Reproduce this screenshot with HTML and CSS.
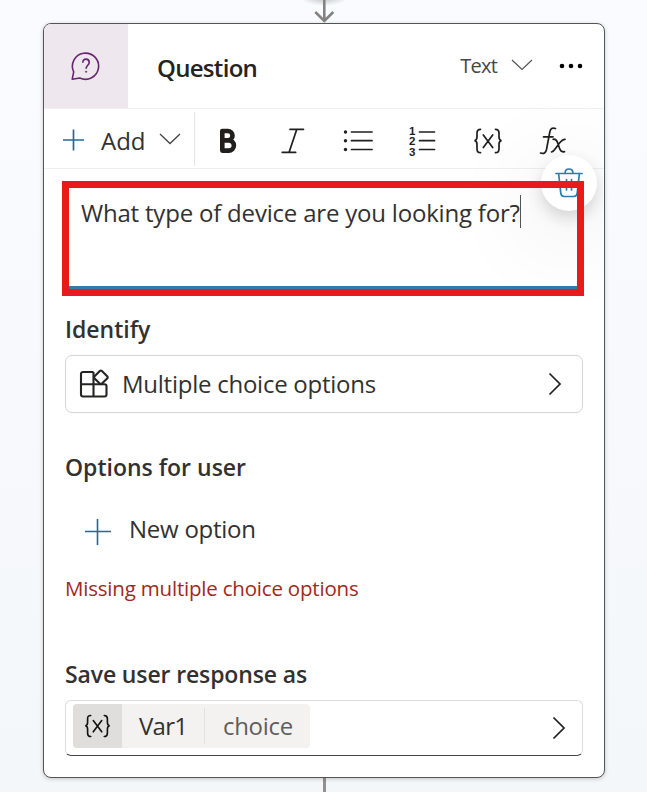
FILE: index.html
```html
<!DOCTYPE html>
<html lang="en">
<head>
<meta charset="utf-8">
<title>Question node</title>
<link rel="stylesheet" href="styles.css">
</head>
<body>
<main class="canvas">
  <div class="connector-top">
    <svg width="24" height="23" viewBox="0 0 24 23" fill="none" stroke="#858381" stroke-width="2.6"><path d="M12.300 0v21M3.300 12l9 9 9-9"/></svg>
  </div>
  <section class="card">
    <header class="card-header">
      <div class="node-icon">
        <svg width="30" height="30" viewBox="0 0 30 30" fill="none" stroke="#66276e" stroke-width="1.6" stroke-linejoin="round"><path d="M1.2 28.2l1.5-7.3A13.1 13.1 0 1 1 8.8 27z"/><path d="M11.8 11.8c0-2.5 1.4-3.7 3.2-3.7s3.2 1.3 3.2 3.3c0 2.8-3.1 3.1-3.1 6.4"/><circle cx="15.1" cy="20.7" r=".7" fill="#66276e" stroke-width=".6"/></svg>
      </div>
      <h1 class="title">Question</h1>
      <button class="type-button"><span class="type-label">Text</span>
        <svg width="22" height="12" viewBox="0 0 22 12" fill="none" stroke="#555" stroke-width="1.2"><path d="M1 1l10 9.500L21 1"/></svg>
      </button>
      <svg class="more" width="24" height="6" viewBox="0 0 24 6"><circle cx="3" cy="3" r="2.300"/><circle cx="12" cy="3" r="2.300"/><circle cx="21" cy="3" r="2.300"/></svg>
    </header>
    <div class="toolbar">
      <button class="add-button">
        <svg width="22" height="22" viewBox="0 0 22 22" fill="none" stroke="#23699b" stroke-width="1.7"><path d="M10.500 .5v21M0 11h21"/></svg>
        <span class="add-label">Add</span>
        <svg class="add-chevron" width="22" height="12" viewBox="0 0 22 12" fill="none" stroke="#444" stroke-width="1.3"><path d="M1 1l10 9.500L21 1"/></svg>
      </button>
      <div class="tools">
        <svg width="20" height="26" viewBox="0 0 20 26" fill="none" stroke="#201f1e" stroke-width="4.6" stroke-linejoin="round"><path d="M3.300 3h5.500a4.500 4.500 0 0 1 0 9.400H3.300zM3.300 12.400h6.500a5 5 0 0 1 0 10.200H3.300z"/></svg>
        <svg width="24" height="26" viewBox="0 0 24 26" fill="none" stroke="#201f1e" stroke-width="1.7" stroke-linecap="round"><path d="M9 1.300h13.500M1.200 24.300h13.500M15.800 1.300l-7.700 23"/></svg>
        <svg width="30" height="26" viewBox="0 0 30 26" fill="none" stroke="#201f1e" stroke-width="1.7" stroke-linecap="round"><path d="M8.500 4H29M8.500 12.700H29M8.500 21.500H29"/><g fill="#201f1e" stroke="none"><circle cx="2.500" cy="4" r="1.700"/><circle cx="2.500" cy="12.700" r="1.700"/><circle cx="2.500" cy="21.500" r="1.700"/></g></svg>
        <svg class="numbered" width="28" height="32" viewBox="0 0 28 32"><path d="M11.500 7H26.500M11.500 15.700H26.500M11.500 24.500H26.500" fill="none" stroke="#201f1e" stroke-width="1.700" stroke-linecap="round"/><text x="1" y="9.500">1</text><text x="1" y="20">2</text><text x="1" y="30.500">3</text></svg>
        <svg width="30" height="26" viewBox="0 0 30 26" fill="none" stroke="#201f1e" stroke-width="1.700" stroke-linecap="round"><path d="M7.500 1.300C4.500 1.300 4 2.600 4 5v4c0 2.300-.8 3.400-2.500 3.700C3.200 13 4 14.100 4 16.400V21c0 2.400.5 3.700 3.500 3.700M22.500 1.300C25.500 1.300 26 2.600 26 5v4c0 2.300.8 3.400 2.500 3.700C26.800 13 26 14.100 26 16.400V21c0 2.400-.5 3.700-3.500 3.700M10.300 7l9.400 12.500M19.700 7l-9.400 12.500"/></svg>
        <svg width="28" height="30" viewBox="0 0 28 30" fill="none" stroke="#201f1e" stroke-width="1.700" stroke-linecap="round"><path d="M1.500 27c3.500 1.200 5.300-.2 6-3.500l3.300-17.500c.7-3.500 2.500-4.700 5.700-3.500M4.500 10.800h9.500M14.200 13.300c2.500-.5 3.300.5 4.200 3l2.300 6.500c1 2.800 2.300 3.500 4.800 2.800M26 13.300c-2.500 0-4 1.800-5.700 4l-3.600 5c-1.500 2.200-2.500 3.500-4.200 3.700"/></svg>
      </div>
    </div>
    <div class="card-body">
      <div class="message"><span class="message-text">What type of device are you looking for?</span><i class="caret"></i></div>
      <h2 class="heading identify">Identify</h2>
      <div class="select">
        <svg width="30" height="30" viewBox="0 0 30 30" fill="none" stroke="#252423" stroke-width="2.100" stroke-linejoin="round"><path d="M14.500 3H4a2 2 0 0 0-2 2v20.500a2 2 0 0 0 2 2h21.500a2 2 0 0 0 2-2v-8.300a2 2 0 0 0-2-2H2M14.500 3v24.500"/><path d="M20.800 2.100a1.500 1.500 0 0 1 2.100 0l5.300 5.200a1.500 1.500 0 0 1 0 2.100L22.900 14.600a1.500 1.500 0 0 1-2.100 0l-5.200-5.200a1.500 1.500 0 0 1 0-2.100z"/></svg>
        <span class="select-label">Multiple choice options</span>
        <svg class="chevron-right" width="14" height="24" viewBox="0 0 14 24" fill="none" stroke="#201f1e" stroke-width="1.700"><path d="M1.500 1.500L12 12 1.500 22.500"/></svg>
      </div>
      <h2 class="heading options">Options for user</h2>
      <button class="new-option">
        <svg width="26" height="26" viewBox="0 0 26 26" fill="none" stroke="#23699b" stroke-width="1.600"><path d="M12.500 0v26M0 12.500h26"/></svg>
        <span class="new-label">New option</span>
      </button>
      <p class="error">Missing multiple choice options</p>
      <h2 class="heading save">Save user response as</h2>
      <div class="variable">
        <div class="chip">
          <span class="chip-icon"><svg width="27" height="24" viewBox="0 0 30 26" fill="none" stroke="#111" stroke-width="1.800" stroke-linecap="round"><path d="M7.500 1.300C4.500 1.300 4 2.600 4 5v4c0 2.300-.8 3.400-2.500 3.700C3.200 13 4 14.100 4 16.400V21c0 2.400.5 3.700 3.500 3.700M22.500 1.300C25.500 1.300 26 2.600 26 5v4c0 2.300.8 3.400 2.500 3.700C26.800 13 26 14.100 26 16.400V21c0 2.400-.5 3.700-3.500 3.700M10.300 7l9.400 12.500M19.700 7l-9.400 12.500"/></svg></span>
          <span class="chip-name">Var1</span>
          <span class="chip-type">choice</span>
        </div>
        <svg class="chevron-right" width="14" height="24" viewBox="0 0 14 24" fill="none" stroke="#201f1e" stroke-width="1.700"><path d="M1.500 1.500L12 12 1.500 22.500"/></svg>
      </div>
    </div>
    <button class="delete" aria-label="Delete">
      <svg width="28" height="30" viewBox="0 0 28 30" fill="none" stroke="#2b7cad" stroke-width="1.700" stroke-linecap="round" stroke-linejoin="round"><path d="M1 5.500h26M10 5.500c0-2.700 1.500-4.500 4-4.500s4 1.800 4 4.500M3.600 5.500l2.200 19.700c.3 2.300 1.500 3.300 3.400 3.300h9.600c1.900 0 3.100-1 3.400-3.300l2.200-19.700M11.500 11.500v10.500M16.500 11.500v10.500"/></svg>
    </button>
    <div class="highlight"></div>
  </section>
  <div class="connector-bottom"></div>
</main>
</body>
</html>
```
FILE: styles.css
```css
* { box-sizing: border-box; }
body { margin: 0; font-family: "Open Sans", "Noto Sans", sans-serif; color: #323130; }
button { border: 0; padding: 0; background: none; font: inherit; color: inherit; }
h1, h2, p { margin: 0; }
svg { display: block; flex: none; }
span { white-space: nowrap; }

.canvas { height: 792px; overflow: hidden; background: linear-gradient(#fafbfe, #f7f9fd 50%, #f3f7fa); }
.connector-top { height: 23px; padding-left: 312px; background: radial-gradient(ellipse 24px 9px at 324px -3px, #bbb, transparent); }
.connector-bottom { width: 3px; height: 14px; margin-left: 323px; background: #93918f; }

.card { position: relative; width: 562px; height: 755px; margin-left: 43px; border: 1px solid #555; border-radius: 8px; background: #fff; box-shadow: 0 1px 4px rgba(0,0,0,.2); }
.card-header { display: flex; align-items: center; height: 85px; border-bottom: 1px solid #efefef; }
.node-icon { display: flex; align-items: center; justify-content: center; width: 84px; height: 84px; border-radius: 7px 0 0 0; background: #eee7ee; }
.title { flex: 1; margin-left: 29px; padding-top: 4px; font-size: 24px; line-height: 30px; font-weight: 600; letter-spacing: -.7px; color: #242322; }
.type-button { display: flex; align-items: center; gap: 14px; margin-right: 26px; }
.type-label { margin-top: -1px; font-size: 20px; line-height: 26px; letter-spacing: -.8px; color: #484644; }
.type-button svg { margin-top: -3px; }
.more { margin-right: 21px; fill: #000; }

.toolbar { display: flex; align-items: center; height: 60px; border-bottom: 1px solid #efefef; }
.add-button { display: flex; align-items: center; width: 151px; height: 54px; padding: 5px 0 0 19px; border-right: 1px solid #e5e5e5; }
.add-button > svg:first-child { margin-top: -2px; }
.add-label { width: 44px; margin-left: 16px; font-size: 24px; line-height: 30px; text-align: left; }
.add-chevron { margin: -4px 0 0 14px; }
.tools { display: flex; align-items: center; flex: 1; gap: 38px; padding: 4px 0 0 24px; }
.tools svg:nth-child(2) { margin-left: 4px; }
.tools svg:nth-child(4) { margin-left: -3px; }
.tools svg:nth-child(5) { margin-left: -1px; }
.tools svg:nth-child(6) { margin-left: -2px; }
.numbered text { font: 700 11.5px "Liberation Sans", sans-serif; fill: #201f1e; }

.card-body { padding: 16px 21px 0; }
.message { display: flex; height: 105px; padding: 13px 0 0 16px; border-bottom: 4px solid #337bab; }
.message-text { font-size: 24px; line-height: 30px; letter-spacing: -.2px; }
.caret { width: 1px; height: 33px; margin-top: -3px; background: #555; }
.heading { font-size: 23px; line-height: 30px; font-weight: 600; white-space: nowrap; }
.identify { margin-top: 24px; }
.select { display: flex; align-items: center; height: 58px; margin-top: 11px; padding: 0 20px 0 13px; border: 1px solid #d4d4d4; border-radius: 7px; }
.select-label { flex: 1; margin-left: 13px; font-size: 24px; line-height: 30px; letter-spacing: -.25px; }
.options { margin-top: 39px; }
.new-option { display: flex; align-items: center; height: 30px; margin: 32px 0 0 20px; }
.new-option svg { margin-top: 5px; }
.new-label { margin-left: 18px; font-size: 24px; line-height: 30px; letter-spacing: -.25px; }
.error { margin-top: 31px; font-size: 20.5px; line-height: 26px; letter-spacing: -.2px; color: #a02820; white-space: nowrap; }
.save { margin-top: 58px; letter-spacing: -.13px; }
.variable { display: flex; justify-content: space-between; height: 56px; margin-top: 11px; padding: 3px 16px 0 7px; border: 1px solid #dcdcdc; border-bottom-color: #484848; border-radius: 6px; }
.chip { display: flex; align-items: center; width: 237px; height: 44px; border-radius: 4px; overflow: hidden; background: #f3f2f1; font-size: 24px; line-height: 30px; }
.chip-icon { display: flex; align-items: center; justify-content: center; width: 49px; height: 44px; background: #dfdedd; }
.chip-name { width: 83px; height: 36px; padding-left: 17px; line-height: 36px; letter-spacing: -.7px; border-right: 1px solid #e3e2e1; }
.chip-type { padding-left: 18px; letter-spacing: -.3px; color: #605e5c; }
.variable > .chevron-right { margin-top: 12px; }

.delete { position: absolute; left: 497px; top: 131px; display: flex; align-items: center; justify-content: center; width: 56px; height: 56px; border-radius: 50%; background: #fff; box-shadow: 0 7px 16px rgba(0,0,0,.15), 0 20px 90px 20px rgba(0,0,0,.06); clip-path: inset(-131px -6px -200px -250px); }
.highlight { position: absolute; left: 18px; top: 157px; width: 522px; height: 115px; border: 7px solid #e81b1b; }
```
